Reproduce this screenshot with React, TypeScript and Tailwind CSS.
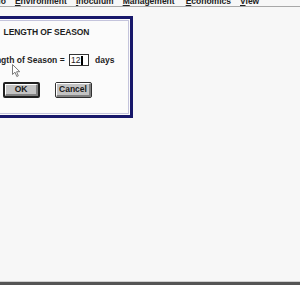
import React from "react";

const font = { fontFamily: '"Liberation Sans", Arial, sans-serif' };

function MenuItem({ first, rest }: { first: string; rest: string }) {
  return (
    <span className="whitespace-nowrap">
      <span className="underline underline-offset-[1px]">{first}</span>
      {rest}
    </span>
  );
}

function Button({ label, isDefault }: { label: string; isDefault?: boolean }) {
  return (
    <div
      className={`w-[37px] h-[16px] rounded-[2px] bg-[#c3c3c3] flex ${
        isDefault ? "border-2 border-[#202020]" : "border border-[#303030]"
      }`}
    >
      <div className="flex-1 border-t border-l border-t-white border-l-white border-b-2 border-r-2 border-b-[#808080] border-r-[#808080] flex items-center justify-center text-[8.5px] font-bold leading-none text-[#1a1a1a]">
        {label}
      </div>
    </div>
  );
}

export default function App() {
  return (
    <div
      className="w-[300px] h-[285px] bg-[#f7f7f7] flex flex-col overflow-hidden relative"
      style={font}
    >
      {/* Menu bar (mostly clipped at top) */}
      <div className="h-[6px] overflow-hidden">
        <div className="-mt-[3px] ml-[-30px] flex gap-[9px] text-[8.5px] leading-[8.5px] font-bold text-[#222]">
          <MenuItem first="S" rest="cenario" />
          <MenuItem first="E" rest="nvironment" />
          <MenuItem first="I" rest="noculum" />
          <MenuItem first="M" rest="anagement" />
          <span className="ml-[2px]">
            <MenuItem first="E" rest="conomics" />
          </span>
          <MenuItem first="V" rest="iew" />
        </div>
      </div>
      <div className="h-px bg-[#a8a8a8]" />

      {/* Main area */}
      <div className="flex-1 pt-[9px]">
        <div className="ml-[-40px] w-[173px] h-[102px] border-[3px] border-[#17176a] bg-[#fbfbfb] p-px">
          <div className="h-full border border-[#c4c4dc] flex flex-col">
            <div className="mt-[6px] text-center text-[8.5px] leading-[10px] font-bold tracking-[-0.1px] text-[#1e1e1e]">
              LENGTH OF SEASON
            </div>
            <div className="mt-[17px] ml-[21px] flex items-center text-[8.5px] font-bold text-[#1e1e1e]">
              <div className="w-[78px] text-right whitespace-nowrap leading-[12px]">
                Length of Season =
              </div>
              <div className="ml-[5px] w-[20px] h-[12px] border border-[#333] bg-white flex items-center pl-[1px] leading-none font-normal text-[8.5px]">
                <span>12</span>
                <span className="ml-[1px] w-[1.5px] h-[9px] bg-black" />
              </div>
              <div className="ml-[6px] leading-[12px]">days</div>
            </div>
            <div className="mt-[16px] ml-[38px] flex gap-[15px]">
              <Button label="OK" isDefault />
              <Button label="Cancel" />
            </div>
          </div>
        </div>
      </div>

      {/* Bottom edge */}
      <div className="h-px bg-[#cfcfcf]" />
      <div className="h-[3px] bg-[#555]" />

      {/* Mouse pointer */}
      <svg
        className="absolute left-[12px] top-[64px]"
        width="9"
        height="14"
        viewBox="0 0 9 14"
      >
        <path
          d="M0.5 0.5 L0.5 10.5 L3 8.2 L4.8 12.5 L6.3 11.9 L4.6 7.7 L7.8 7.7 Z"
          fill="#ffffff"
          stroke="#7a7a7a"
          strokeWidth="1"
          strokeLinejoin="miter"
        />
      </svg>
    </div>
  );
}
